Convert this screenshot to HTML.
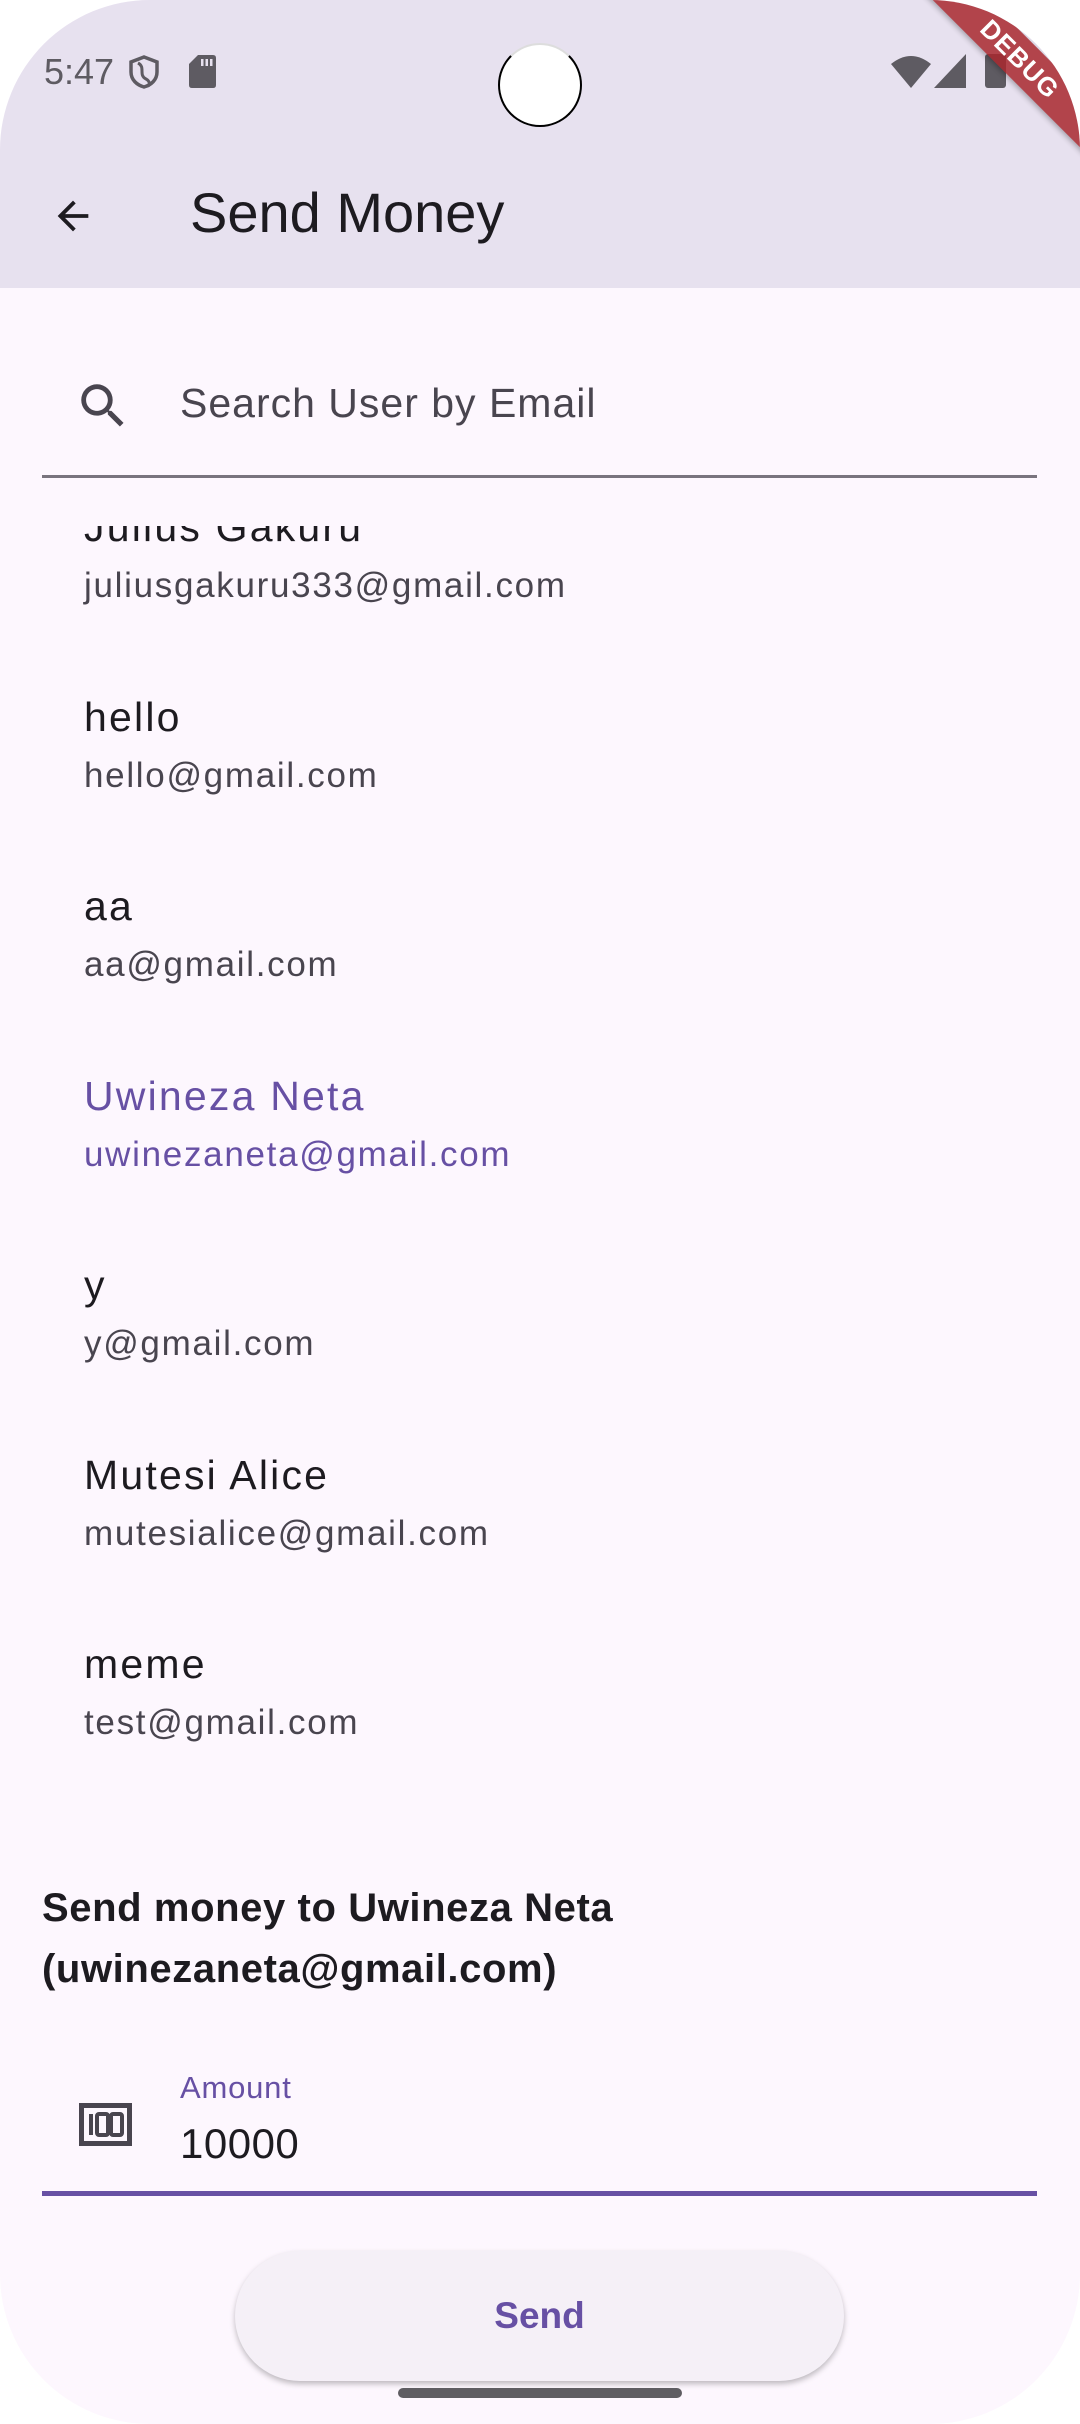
<!DOCTYPE html>
<html><head><meta charset="utf-8"><style>
*{margin:0;padding:0;box-sizing:border-box}
html,body{width:1080px;height:2424px;background:#fff;overflow:hidden;font-family:"Liberation Sans",sans-serif}
#s{position:absolute;left:0;top:0;width:1080px;height:2424px;border-radius:150px;overflow:hidden;background:#FDF7FE}
.ab{position:absolute;left:0;top:0;width:1080px;height:288px;background:#E7E1EF}
.t{position:absolute;white-space:nowrap}
.cam{position:absolute;left:498px;top:43px;width:84px;height:84px;border-radius:50%;background:#fff;border:2px solid #000;border-top-color:#ddd}
.item{position:absolute;left:84px}
.nm{font-size:41px;color:#1D1B20;letter-spacing:2.2px;position:absolute;left:0;white-space:nowrap}
.em{font-size:35px;color:#49454F;letter-spacing:1.7px;position:absolute;left:0;white-space:nowrap}
.sel .nm,.sel .em{color:#6750A4}
</style></head><body>
<div id="s">
<div class="ab"></div>
<div class="t" style="left:44px;top:51px;font-size:36px;color:#5E5B62">5:47</div>
<svg class="t" style="left:128px;top:55px" width="32" height="34" viewBox="0 0 32 34"><path d="M16 2 L29 7 V17 C29 25 23 30 16 32 C9 30 3 25 3 17 V7 Z" fill="none" stroke="#5E5B62" stroke-width="3.5"/><path d="M10 8 C18 12 10 20 18 24 C22 26 22 30 20 31" fill="none" stroke="#5E5B62" stroke-width="3"/></svg>
<svg class="t" style="left:189px;top:55px" width="27" height="33" viewBox="0 0 27 33"><path d="M9 0 H24 Q27 0 27 3 V30 Q27 33 24 33 H3 Q0 33 0 30 V9 Z" fill="#5E5B62"/><rect x="12" y="4" width="2.5" height="7" fill="#E7E1EF"/><rect x="16.5" y="4" width="2.5" height="7" fill="#E7E1EF"/><rect x="21" y="4" width="2.5" height="7" fill="#E7E1EF"/></svg>
<div class="cam"></div>
<svg class="t" style="left:891px;top:54px" width="40" height="34" viewBox="0 0 40 34"><path d="M0 10 Q20 -6 40 10 L20 34 Z" fill="#5E5B62"/></svg>
<svg class="t" style="left:934px;top:54px" width="32" height="34" viewBox="0 0 32 34"><path d="M32 0 V34 H0 Z" fill="#5E5B62"/></svg>
<div class="t" style="left:985px;top:54px;width:21px;height:34px;background:#5E5B62;border-radius:3px"></div>
<div class="t" style="left:870px;top:39px;width:300px;height:40px;background:rgba(168,40,46,0.85);transform:rotate(45deg);transform-origin:150px 20px;box-shadow:0 2px 6px rgba(0,0,0,.3);color:#fff;font-weight:bold;font-size:26px;line-height:40px;text-align:center;letter-spacing:1px">DEBUG</div>
<svg class="t" style="left:50px;top:193px" width="46" height="46" viewBox="0 0 24 24"><path d="M20 11H7.83l5.59-5.59L12 4l-8 8 8 8 1.41-1.41L7.83 13H20v-2z" fill="#1D1B20"/></svg>
<div class="t" style="left:190px;top:178px;font-size:56px;color:#1D1B20;line-height:70px">Send Money</div>
<svg class="t" style="left:74px;top:377px" width="58" height="58" viewBox="0 0 24 24"><path d="M15.5 14h-.79l-.28-.27A6.470 6.47 0 0 0 16 9.5 6.5 6.5 0 1 0 9.5 16c1.61 0 3.09-.59 4.230-1.57l.27.28v.79l5 4.99L20.49 19l-4.99-5zm-6 0C7.01 14 5 11.99 5 9.5S7.01 5 9.5 5 14 7.01 14 9.5 11.99 14 9.5 14z" fill="#49454F"/></svg>
<div class="t" style="left:180px;top:380px;font-size:41px;color:#49454F;letter-spacing:1px">Search User by Email</div>
<div class="t" style="left:42px;top:475px;width:995px;height:3px;background:#79747E"></div>
<div class="t" style="left:0;top:526px;width:1080px;height:1260px;overflow:hidden">
 <div class="item" style="top:-22px"><div class="nm" style="top:0">Julius Gakuru</div><div class="em" style="top:62px">juliusgakuru333@gmail.com</div></div>
 <div class="item" style="top:168px"><div class="nm" style="top:0">hello</div><div class="em" style="top:62px">hello@gmail.com</div></div>
 <div class="item" style="top:357px"><div class="nm" style="top:0">aa</div><div class="em" style="top:62px">aa@gmail.com</div></div>
 <div class="item sel" style="top:547px"><div class="nm" style="top:0">Uwineza Neta</div><div class="em" style="top:62px">uwinezaneta@gmail.com</div></div>
 <div class="item" style="top:736px"><div class="nm" style="top:0">y</div><div class="em" style="top:62px">y@gmail.com</div></div>
 <div class="item" style="top:926px"><div class="nm" style="top:0">Mutesi Alice</div><div class="em" style="top:62px">mutesialice@gmail.com</div></div>
 <div class="item" style="top:1115px"><div class="nm" style="top:0">meme</div><div class="em" style="top:62px">test@gmail.com</div></div>
</div>
<div class="t" style="left:42px;top:1878px;font-size:40px;font-weight:bold;color:#1D1B20;line-height:61px;letter-spacing:0.6px">Send money to Uwineza Neta<br>(uwinezaneta@gmail.com)</div>
<svg class="t" style="left:79px;top:2103px" width="53" height="43" viewBox="0 0 53 43"><rect x="2.5" y="2.5" width="48" height="38" fill="none" stroke="#49454F" stroke-width="5"/><rect x="10" y="11" width="4" height="21" fill="#49454F"/><rect x="18" y="11" width="11" height="21" rx="2" fill="none" stroke="#49454F" stroke-width="4"/><rect x="32" y="11" width="11" height="21" rx="2" fill="none" stroke="#49454F" stroke-width="4"/></svg>
<div class="t" style="left:180px;top:2070px;font-size:31px;color:#6750A4;letter-spacing:0.8px">Amount</div>
<div class="t" style="left:180px;top:2120px;font-size:42px;color:#1D1B20;letter-spacing:0.5px">10000</div>
<div class="t" style="left:42px;top:2191px;width:995px;height:5px;background:#6750A4"></div>
<div class="t" style="left:235px;top:2251px;width:609px;height:130px;border-radius:65px;background:#F5F0F7;box-shadow:0 3px 6px rgba(0,0,0,.25);text-align:center;line-height:130px;font-size:37px;font-weight:bold;color:#6750A4">Send</div>
<div class="t" style="left:398px;top:2388px;width:284px;height:10px;border-radius:5px;background:#5f5d62"></div>
</div>
</body></html>
